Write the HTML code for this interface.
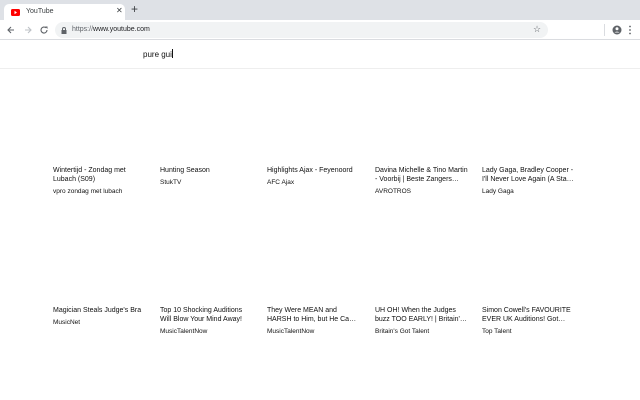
<!DOCTYPE html>
<html><head><meta charset="utf-8"><style>
*{margin:0;padding:0;box-sizing:border-box}
body{width:640px;height:400px;overflow:hidden;background:#fff;font-family:"Liberation Sans",Arial,sans-serif;position:relative;color:#0f0f0f}
.tabbar{position:absolute;left:0;top:0;width:640px;height:20px;background:#dee1e6}
.tab{position:absolute;left:4px;top:4px;width:121px;height:17px;background:#fff;border-radius:5px 5px 0 0}
.tab .t{position:absolute;left:22px;top:4px;font-size:7px;color:#3c4043}
.tab .x{position:absolute;left:112px;top:2px;font-size:8px;color:#3c4043}
.plus{position:absolute;left:131px;top:3px;font-size:12px;color:#3c4043;line-height:12px}
.toolbar{position:absolute;left:0;top:20px;width:640px;height:20px;background:#fff;border-bottom:1px solid #dadce0}
.url{position:absolute;left:55px;top:2px;width:493px;height:16px;background:#f1f3f4;border-radius:8px}
.url .u{position:absolute;left:17px;top:4px;font-size:7px;color:#202124}
.url .u span{color:#5f6368}
.sep{position:absolute;left:0;top:68px;width:640px;height:1px;background:#eee}
.q{position:absolute;left:143px;top:49px;font-size:8px;color:#111}
.card{position:absolute;width:98px;font-size:7px;line-height:9px;color:#111}
.card .c{margin-top:3px;font-size:6.5px;color:#111}
</style></head><body>
<div class="tabbar">
 <div class="tab">
  <svg style="position:absolute;left:7px;top:5px" width="9" height="7" viewBox="0 0 9 7"><rect width="9" height="7" rx="1.5" fill="#f00"/><path d="M3.5 1.8L6 3.5 3.5 5.2z" fill="#fff"/></svg>
  <div class="t">YouTube</div><div class="x">✕</div>
 </div>
 <div class="plus">+</div>
</div>
<div class="toolbar">
 <svg style="position:absolute;left:6px;top:5px" width="10" height="10" viewBox="0 0 10 10"><path d="M8 5H2M5 2L2 5l3 3" stroke="#5f6368" stroke-width="1.1" fill="none"/></svg>
 <svg style="position:absolute;left:23px;top:5px" width="10" height="10" viewBox="0 0 10 10"><path d="M2 5h6M5 2l3 3-3 3" stroke="#bdc1c6" stroke-width="1.1" fill="none"/></svg>
 <svg style="position:absolute;left:39px;top:5px" width="10" height="10" viewBox="0 0 10 10"><path d="M8 5A3 3 0 1 1 7 2.8" stroke="#5f6368" stroke-width="1.1" fill="none"/><path d="M6 1.5h2.5V4z" fill="#5f6368"/></svg>
 <div class="url">
  <svg style="position:absolute;left:6px;top:5px" width="6" height="7" viewBox="0 0 6 7"><rect x="0.5" y="3" width="5" height="4" fill="#5f6368"/><path d="M1.5 3V2a1.5 1.5 0 0 1 3 0v1" stroke="#5f6368" fill="none"/></svg>
  <div class="u"><span>https://</span>www.youtube.com</div>
  <div style="position:absolute;left:478px;top:2px;font-size:9px;color:#5f6368">☆</div>
 </div>
 <div style="position:absolute;left:604px;top:4px;width:1px;height:12px;background:#dadce0"></div>
 <svg style="position:absolute;left:612px;top:5px" width="10" height="10" viewBox="0 0 10 10"><circle cx="5" cy="5" r="4.5" fill="#5f6368"/><circle cx="5" cy="3.8" r="1.5" fill="#fff"/><path d="M2.5 7.5a3 2 0 0 1 5 0" fill="#fff"/></svg>
 <svg style="position:absolute;left:628px;top:5px" width="4" height="10" viewBox="0 0 4 10"><circle cx="2" cy="1.5" r="0.9" fill="#5f6368"/><circle cx="2" cy="5" r="0.9" fill="#5f6368"/><circle cx="2" cy="8.5" r="0.9" fill="#5f6368"/></svg>
</div>
<div class="q">pure gui<span style="display:inline-block;width:1px;height:9px;background:#111;vertical-align:-1px"></span></div>
<div class="sep"></div>

<div class="card" style="left:53px;top:166px">Wintertijd - Zondag met<br>Lubach (S09)<div class="c">vpro zondag met lubach</div></div>
<div class="card" style="left:160px;top:166px">Hunting Season<div class="c">StukTV</div></div>
<div class="card" style="left:267px;top:166px">Highlights Ajax - Feyenoord<div class="c">AFC Ajax</div></div>
<div class="card" style="left:375px;top:166px">Davina Michelle &amp; Tino Martin<br>- Voorbij | Beste Zangers…<div class="c">AVROTROS</div></div>
<div class="card" style="left:482px;top:166px">Lady Gaga, Bradley Cooper -<br>I'll Never Love Again (A Sta…<div class="c">Lady Gaga</div></div>

<div class="card" style="left:53px;top:306px">Magician Steals Judge's Bra<div class="c">MusicNet</div></div>
<div class="card" style="left:160px;top:306px">Top 10 Shocking Auditions<br>Will Blow Your Mind Away!<div class="c">MusicTalentNow</div></div>
<div class="card" style="left:267px;top:306px">They Were MEAN and<br>HARSH to Him, but He Ca…<div class="c">MusicTalentNow</div></div>
<div class="card" style="left:375px;top:306px">UH OH! When the Judges<br>buzz TOO EARLY! | Britain'…<div class="c">Britain's Got Talent</div></div>
<div class="card" style="left:482px;top:306px">Simon Cowell's FAVOURITE<br>EVER UK Auditions! Got…<div class="c">Top Talent</div></div>
</body></html>
